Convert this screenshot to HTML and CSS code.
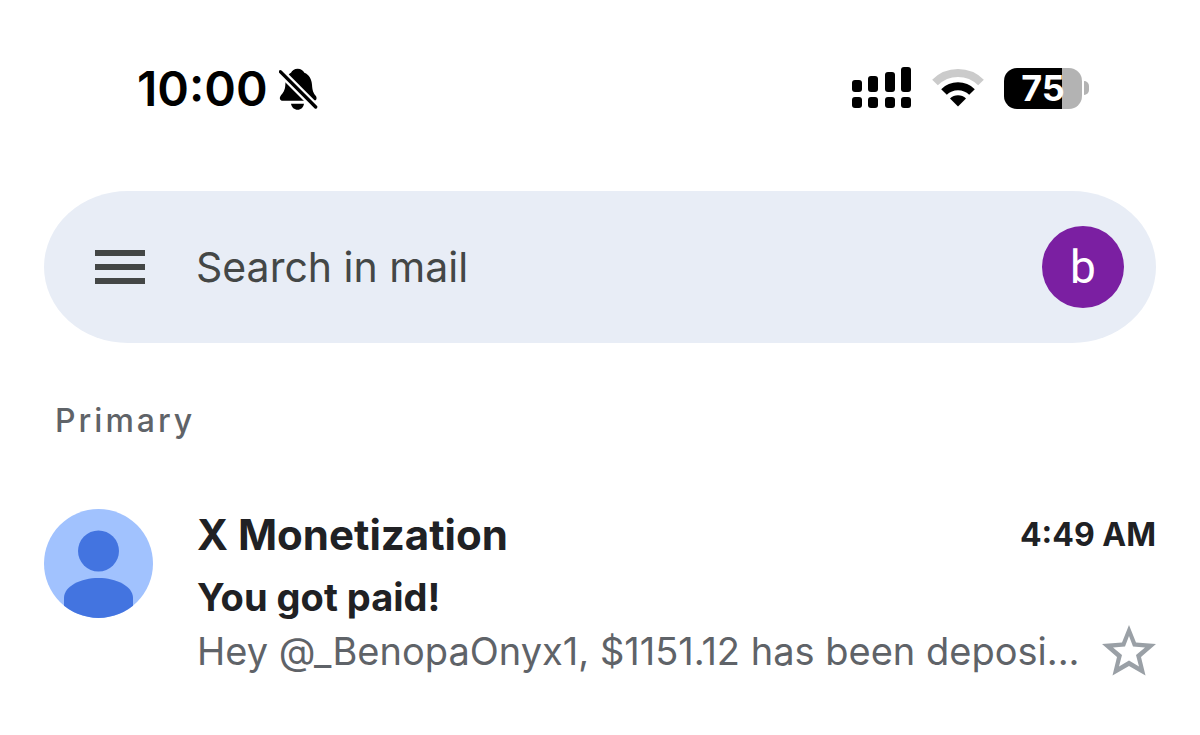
FILE: index.html
```html
<!DOCTYPE html>
<html lang="en">
<head>
    <meta charset="utf-8">
    <meta name="viewport" content="width=device-width, initial-scale=1">
    <title>Primary</title>
    <link rel="stylesheet" href="styles.css">
</head>
<body>
    <header class="statusBar">
        <div class="clock">
            <span>10:00</span>
            <svg width="39" height="42" viewBox="477 54 117 126" aria-hidden="true">
                <path d="M533 56c10 0 17 5 20 12 15 6 22 20 23 36 1 17 4 25 11 33 5 6 3 15-5 15h-94c-8 0-11-8-6-15 8-10 13-16 14-33 1-16 6-30 17-36 3-7 10-12 20-12z"/>
                <path d="M513 161h39c-2 11-9 18-19 18s-18-7-20-18z"/>
                <path d="M474 58l122 122" stroke="#fff" stroke-width="24"/>
                <path d="M481 65l106 106" stroke="#000" stroke-width="10" stroke-linecap="round"/>
            </svg>
        </div>
        <div class="statusIcons">
            <svg width="60" height="42" viewBox="0 0 60 42" aria-hidden="true">
                <rect x="0" y="13" width="10" height="12" rx="3"/>
                <rect x="16" y="9" width="10" height="16" rx="3"/>
                <rect x="33" y="5" width="10" height="20" rx="3"/>
                <rect x="49" y="0" width="10" height="25" rx="3"/>
                <rect x="0" y="30" width="10" height="11" rx="3"/>
                <rect x="16" y="30" width="10" height="11" rx="3"/>
                <rect x="33" y="30" width="10" height="11" rx="3"/>
                <rect x="49" y="30" width="10" height="11" rx="3"/>
            </svg>
            <svg width="52" height="42" viewBox="0 0 52 42" aria-hidden="true">
                <path d="M3 15.5a32.5 32.5 0 0 1 46 0" fill="none" stroke="#cbcbcb" stroke-width="8"/>
                <path d="M12 25a20 20 0 0 1 28 0" fill="none" stroke="#000" stroke-width="8"/>
                <path d="M26 39.500l-8-8a11.500 11.500 0 0 1 16 0z"/>
            </svg>
            <div class="battery">
                <div class="batteryLevel">75</div>
                <div class="batteryTip"></div>
            </div>
        </div>
    </header>

    <form class="searchBar" role="search">
        <button type="button" class="menuButton" aria-label="Menu">
            <svg width="50" height="34" viewBox="0 0 50 34" aria-hidden="true">
                <path d="M0 0h50v6H0zM0 14h50v6H0zM0 28h50v6H0z"/>
            </svg>
        </button>
        <input type="search" class="searchInput" placeholder="Search in mail" aria-label="Search in mail">
        <button type="button" class="accountButton" aria-label="Account">b</button>
    </form>

    <main>
        <h1 class="sectionLabel">Primary</h1>
        <article class="mail">
            <svg class="senderIcon" width="109" height="109" viewBox="0 0 109 109" aria-hidden="true">
                <clipPath id="circle"><circle cx="54.500" cy="54.500" r="54.500"/></clipPath>
                <g clip-path="url(#circle)">
                    <path d="M0 0h110v110H0z" fill="#a1c2fe"/>
                    <circle cx="54.500" cy="42" r="20.500" fill="#4374e0"/>
                    <path d="M20 110V89c0-12 17-20 34.500-20S89 77 89 89v21z" fill="#4374e0"/>
                </g>
            </svg>
            <div class="mailBody">
                <div class="mailRow">
                    <h2 class="sender">X Monetization</h2>
                    <time class="time">4:49 AM</time>
                </div>
                <h3 class="subject">You got paid!</h3>
                <div class="mailRow">
                    <p class="preview">Hey @_BenopaOnyx1, $1151.12 has been deposi...</p>
                    <button type="button" class="starButton" aria-label="Star">
                        <svg width="54" height="52" viewBox="0 0 54 52" aria-hidden="true">
                            <path fill="#9aa0a6" fill-rule="evenodd" d="M27 0l7 17.500 20 1.500-15 13 4.500 18.500L27 41 10.500 50.500 15 32 0 19l20-1.500zM27 11l-4 10.500-12 1 9 7.500-3 11.500 10-6 10 6L34 30l9-7.500-12-1z"/>
                        </svg>
                    </button>
                </div>
            </div>
        </article>
    </main>
</body>
</html>
```
FILE: styles.css
```css
* {
    box-sizing: border-box;
}
body {
    margin: 0;
    padding: 60px 44px 40px;
    background-color: #fff;
    color: #202124;
    font-family: Inter, "Liberation Sans", sans-serif;
}
h1, h2, h3, p {
    margin: 0;
}
button {
    padding: 0;
    border: none;
    background: none;
    font-family: inherit;
    cursor: pointer;
}
svg {
    display: block;
    flex-shrink: 0;
}

/* status bar */
.statusBar {
    display: flex;
    justify-content: space-between;
    align-items: center;
    height: 56px;
    padding: 0 67px 0 93px;
    color: #000;
}
.clock {
    display: flex;
    align-items: center;
    gap: 11px;
    padding-top: 2px;
    font-size: 48px;
    font-weight: 600;
    line-height: 56px;
}
.statusIcons {
    display: flex;
    align-items: center;
    gap: 20px;
}
.battery {
    display: flex;
    align-items: center;
    gap: 2px;
}
.batteryLevel {
    width: 78px;
    height: 41px;
    border-radius: 13px;
    background: linear-gradient(to right, #000 75%, #b3b3b3 75%);
    color: #fff;
    font-size: 36px;
    font-weight: 700;
    line-height: 41px;
    text-align: center;
}
.batteryTip {
    width: 5px;
    height: 14px;
    border-radius: 0 5px 5px 0;
    background-color: #b3b3b3;
}

/* search */
.searchBar {
    display: flex;
    align-items: center;
    height: 152px;
    margin-top: 75px;
    padding: 0 32px 0 51px;
    border-radius: 84px / 76px;
    background-color: #e8edf6;
}
.menuButton {
    color: #444746;
    fill: currentColor;
}
.searchInput {
    flex: 1;
    min-width: 0;
    margin: 0 24px 0 51px;
    padding: 0;
    border: none;
    outline: none;
    background: none;
    color: #444746;
    font-family: inherit;
    font-size: 41px;
    line-height: 56px;
}
.searchInput::placeholder {
    color: #444746;
    opacity: 1;
}
.accountButton {
    width: 82px;
    height: 82px;
    border-radius: 50%;
    background-color: #7b1fa2;
    color: #fff;
    font-family: Roboto, sans-serif;
    font-size: 46px;
}

/* mail list */
.sectionLabel {
    margin-top: 58px;
    padding-left: 11px;
    color: #5f6368;
    font-size: 32px;
    font-weight: 500;
    letter-spacing: 3px;
    line-height: 40px;
}
.mail {
    display: flex;
    gap: 44px;
    margin-top: 68px;
}
.mailBody {
    flex: 1;
    min-width: 0;
}
.mailRow {
    display: flex;
    justify-content: space-between;
    align-items: center;
}
.sender {
    font-size: 42px;
    font-weight: 700;
    line-height: 52px;
}
.time {
    font-size: 32px;
    font-weight: 700;
    line-height: 40px;
}
.subject {
    padding: 12px 0 4px;
    font-size: 38px;
    font-weight: 700;
    line-height: 48px;
}
.preview {
    min-width: 0;
    overflow: hidden;
    color: #5f6368;
    font-size: 38px;
    line-height: 52px;
    text-overflow: ellipsis;
    white-space: nowrap;
}
```
